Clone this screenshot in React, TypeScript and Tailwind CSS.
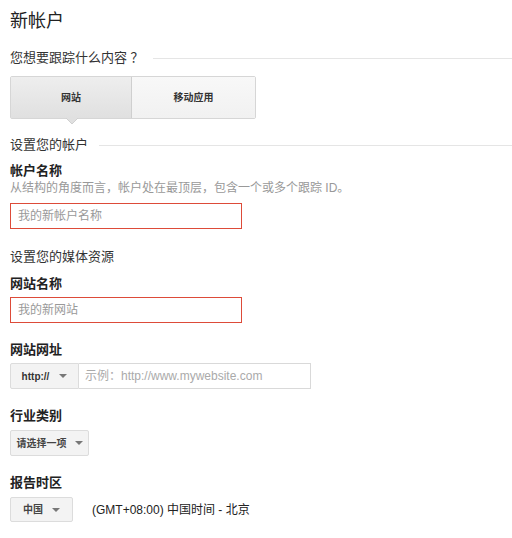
import React from "react";

const Caret = () => (
  <span className="inline-block w-0 h-0 border-l-[4px] border-r-[4px] border-t-[4px] border-l-transparent border-r-transparent border-t-[#777]" />
);

const Section = ({ title, first }: { title: string; first?: boolean }) => (
  <div className="flex items-center h-4">
    <span className="text-[13px] leading-4 text-[#333] whitespace-nowrap">{title}</span>
    <div className={`flex-1 h-px bg-[#e5e5e5] ${first ? "ml-[9px]" : "ml-[11px]"}`} />
  </div>
);

const Label = ({ text }: { text: string }) => (
  <div className="text-[13px] leading-4 font-bold text-[#222]">{text}</div>
);

export default function App() {
  return (
    <div
      className="w-[512px] h-[538px] bg-white pl-[10px] pt-[9px] overflow-hidden"
      style={{ fontFamily: '"Liberation Sans", Arial, "Noto Sans CJK SC", sans-serif' }}
    >
      <div className="text-[18px] leading-6 text-[#222]">新帐户</div>

      <div className="mt-[17px]">
        <Section title="您想要跟踪什么内容 ？" first />
      </div>

      <div className="mt-[10px] relative w-[246px]">
        <div className="flex h-[43px] border border-[#d6d6d6] rounded-[2px]">
          <div className="w-[121px] flex items-center justify-center bg-gradient-to-b from-[#eeeeee] to-[#e0e0e0] border-r border-[#cfcfcf] text-[10px] font-bold text-[#333]">
            网站
          </div>
          <div className="flex-1 flex items-center justify-center bg-gradient-to-b from-[#f8f8f8] to-[#f1f1f1] text-[10px] font-bold text-[#333]">
            移动应用
          </div>
        </div>
        <svg className="absolute left-[56px] top-[42px]" width="12" height="7" viewBox="0 0 12 7">
          <polygon points="0,0 12,0 6,6" fill="#e0e0e0" />
          <polyline points="0,0 6,6 12,0" fill="none" stroke="#d0d0d0" strokeWidth="1" />
        </svg>
      </div>

      <div className="mt-[18px]">
        <Section title="设置您的帐户" />
      </div>

      <div className="mt-[10px]">
        <Label text="帐户名称" />
      </div>
      <div className="mt-[1px] text-[12px] leading-4 text-[#999]">
        从结构的角度而言，帐户处在最顶层，包含一个或多个跟踪 ID。
      </div>
      <div className="mt-[7px] w-[232px] h-[26px] border border-[#dd4b39] flex items-center pl-[7px] text-[12px] text-[#999]">
        我的新帐户名称
      </div>

      <div className="mt-[20px] text-[13px] leading-4 text-[#333]">设置您的媒体资源</div>

      <div className="mt-[11px]">
        <Label text="网站名称" />
      </div>
      <div className="mt-[5px] w-[232px] h-[26px] border border-[#dd4b39] flex items-center pl-[7px] text-[12px] text-[#999]">
        我的新网站
      </div>

      <div className="mt-[19px]">
        <Label text="网站网址" />
      </div>
      <div className="mt-[5px] flex w-[301px] h-[26px]">
        <div className="w-[69px] flex items-center justify-center gap-[10px] bg-[#f3f3f3] border border-[#dcdcdc] rounded-l-[2px] text-[10px] font-bold text-[#333]">
          <span>http://</span>
          <Caret />
        </div>
        <div className="flex-1 flex items-center pl-[6px] border border-l-0 border-[#d9d9d9] text-[12px] text-[#aaa]">
          示例：http://www.mywebsite.com
        </div>
      </div>

      <div className="mt-[19px]">
        <Label text="行业类别" />
      </div>
      <div className="mt-[6px] w-[79px] h-[26px] flex items-center justify-center gap-[8px] bg-[#f3f3f3] border border-[#dcdcdc] rounded-[2px] text-[10px] font-bold text-[#444]">
        <span>请选择一项</span>
        <Caret />
      </div>

      <div className="mt-[19px]">
        <Label text="报告时区" />
      </div>
      <div className="mt-[6px] flex items-center">
        <div className="w-[63px] h-[25px] flex items-center justify-center gap-[9px] bg-[#f3f3f3] border border-[#dcdcdc] rounded-[2px] text-[10px] font-bold text-[#444]">
          <span>中国</span>
          <Caret />
        </div>
        <span className="ml-[19px] text-[12px] text-[#222]">(GMT+08:00) 中国时间 - 北京</span>
      </div>
    </div>
  );
}
